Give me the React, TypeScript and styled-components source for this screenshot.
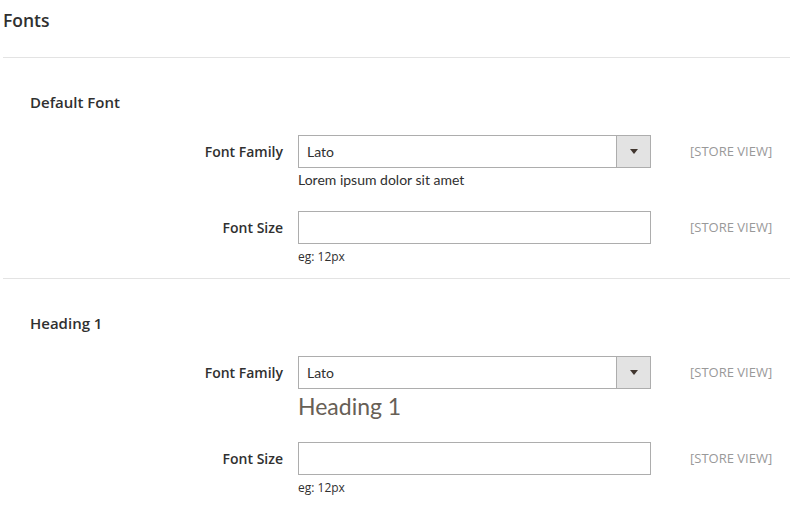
import React from "react";
import styled, { createGlobalStyle } from "styled-components";

const Global = createGlobalStyle`
  html, body { margin: 0; padding: 0; background: #fff; }
  body { font-family: "Open Sans", "Liberation Sans", sans-serif; color: #303030; }
  * { box-sizing: border-box; }
`;

const Page = styled.div`
  padding: 8px 0 0 3px;
  width: 790px;
`;

const Title = styled.h1`
  margin: 0;
  font-size: 17.5px;
  font-weight: 600;
  line-height: 24px;
  color: #303030;
`;

const Divider = styled.hr`
  margin: 25px 0 0 0;
  border: 0;
  border-top: 1px solid #e3e3e3;
  height: 0;
`;

const Section = styled.section<{ $last?: boolean }>`
  padding: 34px 0 ${(p) => (p.$last ? "10px" : "13px")} 0;
  border-bottom: ${(p) => (p.$last ? "0" : "1px solid #e3e3e3")};
`;

const SectionTitle = styled.h2`
  margin: 0 0 0 27px;
  font-size: 15px;
  font-weight: 600;
  line-height: 20px;
  color: #303030;
`;

const Rows = styled.div`
  margin-top: 23px;
  display: flex;
  flex-direction: column;
  gap: 22px;
`;

const Row = styled.div`
  display: grid;
  grid-template-columns: 295px 353px 1fr;
  align-items: start;
`;

const Label = styled.label`
  text-align: right;
  padding-right: 15px;
  font-size: 14px;
  font-weight: 600;
  line-height: 33px;
  color: #303030;
`;

const Control = styled.div`
  display: flex;
  flex-direction: column;
`;

const SelectBox = styled.div`
  display: flex;
  height: 33px;
  border: 1px solid #adadad;
  background: #fff;
`;

const SelectValue = styled.div`
  flex: 1;
  padding-left: 8px;
  font-family: Lato, "Open Sans", sans-serif;
  font-size: 14px;
  line-height: 31px;
  color: #303030;
`;

const SelectButton = styled.div`
  width: 34px;
  border-left: 1px solid #adadad;
  background: #e3e3e3;
  display: flex;
  align-items: center;
  justify-content: center;
`;

const Arrow = styled.span`
  width: 0;
  height: 0;
  border-left: 4px solid transparent;
  border-right: 4px solid transparent;
  border-top: 5px solid #41362f;
`;

const Input = styled.input`
  height: 33px;
  border: 1px solid #adadad;
  padding: 0 9px;
  font-family: "Open Sans", sans-serif;
  font-size: 14px;
  outline: none;
  background: #fff;
`;

const Preview = styled.div<{ $size: number }>`
  font-family: Lato, "Open Sans", sans-serif;
  font-size: ${(p) => p.$size}px;
  line-height: ${(p) => (p.$size > 16 ? "26px" : "18px")};
  margin-top: ${(p) => (p.$size > 16 ? "4px" : "3px")};
  margin-bottom: ${(p) => (p.$size > 16 ? "1px" : "0")};
  color: ${(p) => (p.$size > 16 ? "#676056" : "#303030")};
`;

const Note = styled.div`
  margin-top: 5px;
  font-size: 12px;
  line-height: 16px;
  color: #303030;
`;

const Scope = styled.div`
  padding-left: 39px;
  font-size: 13px;
  line-height: 33px;
  color: #999;
`;

function FontSection({ title, preview, size, last }: { title: string; preview: string; size: number; last?: boolean }) {
  return (
    <Section $last={last}>
      <SectionTitle>{title}</SectionTitle>
      <Rows>
        <Row>
          <Label>Font Family</Label>
          <Control>
            <SelectBox>
              <SelectValue>Lato</SelectValue>
              <SelectButton>
                <Arrow />
              </SelectButton>
            </SelectBox>
            <Preview $size={size}>{preview}</Preview>
          </Control>
          <Scope>[STORE VIEW]</Scope>
        </Row>
        <Row>
          <Label>Font Size</Label>
          <Control>
            <Input type="text" />
            <Note>eg: 12px</Note>
          </Control>
          <Scope>[STORE VIEW]</Scope>
        </Row>
      </Rows>
    </Section>
  );
}

export default function App() {
  return (
    <>
      <Global />
      <Page>
        <Title>Fonts</Title>
        <Divider />
        <FontSection title="Default Font" preview="Lorem ipsum dolor sit amet" size={14} />
        <FontSection title="Heading 1" preview="Heading 1" size={23} last />
      </Page>
    </>
  );
}
